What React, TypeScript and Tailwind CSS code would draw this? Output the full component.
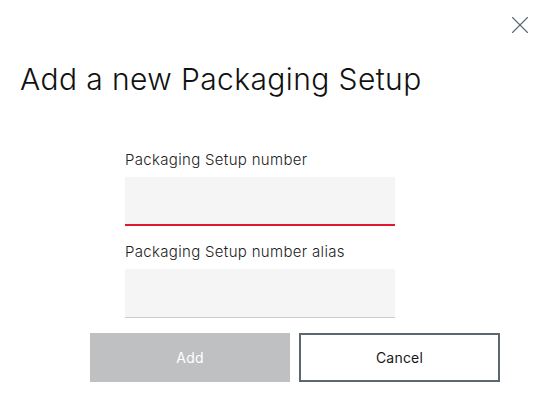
import { X } from 'lucide-react';

export default function App() {
    return (
        <div className="w-[540px] h-[399px] bg-white text-[#171717] font-['Inter',sans-serif] flex flex-col">
            <div className="flex justify-end pt-[10px] pr-[5px]">
                <button className="w-[30px] h-[30px] flex items-center justify-center text-[#5a6872]">
                    <X className="w-[30px] h-[30px]" strokeWidth={0.9} />
                </button>
            </div>

            <h1 className="ml-5 mt-[21px] text-[30px] leading-[36px] font-light tracking-[0.4px] text-[#111]">
                Add a new Packaging Setup
            </h1>

            <div className="ml-[125px] w-[270px] mt-[54px] flex flex-col">
                <label className="text-[15px] leading-[18px] tracking-[0.32px] text-[#222] font-[350]">Packaging Setup number</label>
                <input className="mt-[8px] h-[49px] bg-[#f5f5f5] border-b-2 border-[#e0182d] outline-none px-4 text-sm" />

                <label className="mt-[17px] text-[15px] leading-[18px] tracking-[0.32px] text-[#222] font-[350]">Packaging Setup number alias</label>
                <input className="mt-[8px] h-[49px] bg-[#f5f5f5] border-b border-[#c7ccd1] outline-none px-4 text-sm" />
            </div>

            <div className="ml-[90px] mt-[15px] flex gap-[9px]">
                <button className="w-[200px] h-[49px] bg-[#bfc0c2] text-white text-[14px] tracking-[0.2px]" disabled>
                    Add
                </button>
                <button className="w-[201px] h-[49px] border-2 border-[#5a6872] bg-white text-[#171717] text-[14px] tracking-[0.2px]">
                    Cancel
                </button>
            </div>
        </div>
    );
}
